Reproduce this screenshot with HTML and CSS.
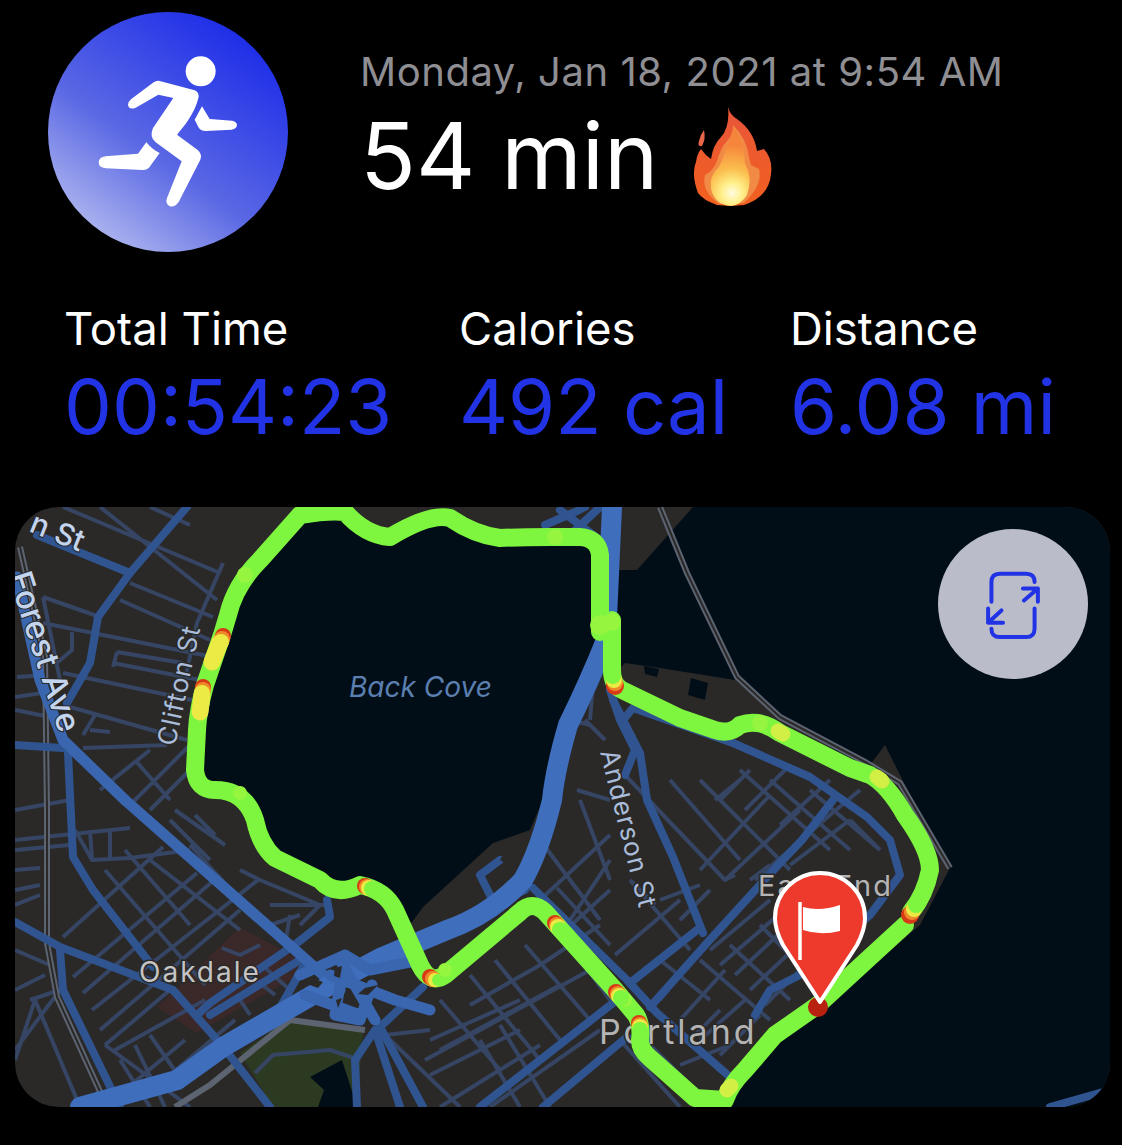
FILE: index.html
```html
<!DOCTYPE html>
<html lang="en">
<head>
<meta charset="UTF-8">
<meta name="viewport" content="width=device-width, initial-scale=1.0">
<title>Workout</title>
<link rel="stylesheet" href="styles.css">
</head>
<body>

<header class="top">
    <div class="badge">
        <svg class="runner" viewBox="55 37 720 720">
            <circle cx="513" cy="215" r="45"/>
            <path d="M295 315 Q296 305 305 298 L372 248 Q380 242 390 244 L495 272 Q510 278 506 296 Q498 330 470 370 L442 405 L505 452 Q518 464 512 480 L447 607 Q435 624 420 620 Q406 612 412 595 L456 485 L378 428 Q358 412 370 385 L431 295 L386 285 L318 324 Q298 332 295 315Z"/>
            <path d="M350 428 Q368 450 390 460 L358 504 Q350 512 338 511 L228 506 Q207 504 207 488 Q208 472 228 470 L325 462Z"/>
            <path d="M517 320 L540 358 L608 363 Q622 366 622 377 Q620 388 606 390 L528 394 Q512 394 506 382 L495 360Z"/>
        </svg>
    </div>
    <div class="summary">
        <div class="date">Monday, Jan 18, 2021 at 9:54 AM</div>
        <div class="duration">
            <span>54 min</span>
            <svg class="flame" viewBox="694 106 80 102">
                <defs>
                    <radialGradient id="fireIn" gradientUnits="userSpaceOnUse" cx="733" cy="194" r="48">
                        <stop offset="0" stop-color="#fffbe0"/>
                        <stop offset="0.22" stop-color="#fff08a"/>
                        <stop offset="0.5" stop-color="#fbbf4e"/>
                        <stop offset="1" stop-color="#f6853c"/>
                    </radialGradient>
                    <linearGradient id="fireOut" x1="0" y1="0" x2="0" y2="1">
                        <stop offset="0" stop-color="#e8553a"/>
                        <stop offset="1" stop-color="#f2601f"/>
                    </linearGradient>
                </defs>
                <path fill="#e8664a" d="M705 131 Q707 140 703 147 Q698 148 700 142 Q701 136 705 131Z"/>
                <path fill="url(#fireOut)" d="M729 108 Q731 116 738 120 Q755 132 758 152 L765 150 Q774 160 772 175 Q770 198 745 206 L732 207 L718 206 Q704 201 699 194 Q692 175 697 163 Q698 155 702 150 Q706 156 712 160 Q714 146 722 138 Q731 128 729 108Z"/>
                <path fill="#f08a45" d="M734 126 Q748 140 750 158 L752 166 L760 170 Q764 186 745 204 L720 205 Q702 192 706 176 Q714 172 718 162 Q722 148 728 142 Q734 136 734 126Z"/>
                <path fill="url(#fireIn)" d="M735 128 Q746 145 746 165 Q754 178 748 196 Q742 206 732 207 Q716 206 712 190 Q710 176 720 168 Q728 150 735 128Z"/>
            </svg>
        </div>
    </div>
</header>

<section class="stats">
    <div class="stat stat-time">
        <div class="stat-label">Total Time</div>
        <div class="stat-value">00:54:23</div>
    </div>
    <div class="stat stat-cal">
        <div class="stat-label">Calories</div>
        <div class="stat-value">492 cal</div>
    </div>
    <div class="stat">
        <div class="stat-label">Distance</div>
        <div class="stat-value">6.08 mi</div>
    </div>
</section>

<section class="map">
    <svg class="map-svg" viewBox="15 507 1095 600">
        <!-- terreno e agua -->
        <rect class="land" x="15" y="507" width="1095" height="600"/>
        <path class="park" d="M240 1053 L287 1020 L363 1030 L357 1107 L273 1107Z"/>
        <path class="campus" d="M240 927 L300 960 L303 973 L207 1027 L197 1033 L157 1007Z"/>
        <path class="water" d="M310 1077 L342 1060 L357 1107 L318 1107 L324 1090Z"/>
        <path class="water" d="M340 507 L385 540 L440 515 L520 535 L590 540 L600 620 L590 660 L560 760 L530 830 L493 843 L423 907 L410 925 L390 900 L360 885 L335 895 L320 880 L270 855 L255 820 L235 795 L205 790 L195 770 L197 730 L205 685 L222 635 L235 590 L260 560 L295 507Z"/>
        <path class="water" d="M693 507 L1110 507 L1110 1107 L730 1107 L745 1075 L778 1040 L820 1012 L920 925 L950 868 L905 785 L885 745 L870 765 L850 760 L780 715 L735 680 L660 668 L625 663 L608 680 L612 570 L637 570Z"/>
        <path class="water" d="M644 666 L659 669 L657 677 L645 674Z M691 678 L708 683 L705 700 L688 695Z"/>

        <!-- ruas pequenas -->
        <path class="street" d="M63 507 L220 573 M100 507 L217 600 M150 507 L190 525 M130 583 L213 617 M120 600 L210 640 M43 597 L100 617 M43 597 L60 680 M43 623 L213 657 M113 663 L200 680 M117 652 L183 663 M117 652 L113 667 M63 673 L192 700 M17 677 L45 675 M70 707 L187 740 M15 697 L42 693 M15 710 L50 717 M83 748 L167 745 M223 563 L197 623 L185 680 M72 632 L72 650 L58 662 M83 735 L95 715 M90 730 L110 732 M100 790 L150 750 M130 805 L190 745 M150 810 L190 770 M135 760 L170 800"/>
        <path class="street" d="M15 810 L70 800 M15 840 L130 828 M15 850 L70 845 M15 870 L40 868 M15 890 L40 885 M15 905 L40 895 M75 830 L92 860 L130 858 L190 850 M90 830 L92 860 M110 830 L110 860 M63 937 L163 847 M73 977 L197 873 M83 993 L220 875 M92 1010 L258 880 M100 1030 L240 910 M105 1045 L170 990 M125 850 L190 925 M105 870 L205 985 M150 860 L240 930 M190 845 L240 900 M170 820 L210 860 M175 810 L225 845 M195 815 L215 835 M240 870 L260 880 L320 905 L300 925 M270 905 L325 905 M290 915 L285 945 M270 925 L300 915 M222 948 L240 955 L260 945 M262 965 L290 990 M250 975 L275 995 M240 1000 L250 1015"/>
        <path class="street" d="M105 1045 L190 1107 M120 1060 L150 1107 M135 1045 L165 1107 M150 1035 L185 1085 M115 1050 L205 1000 M125 1090 L185 1040 M170 1075 L235 1020 M60 990 L15 1050 M30 1000 L60 990 M15 950 L50 965 M15 990 L45 975 M35 1000 L15 1060 M35 1000 L80 1107 M255 1073 L273 1055 L330 1050 L360 1060"/>
        <path class="street" d="M595 660 L590 720 M585 720 L605 740 M590 725 L570 720 M577 790 L610 800 M580 800 L610 880 M610 860 L570 920 M560 935 L610 890 M610 835 L540 900 M540 840 L600 920 M557 888 L610 945 M630 880 L690 950 M680 900 L615 955 M630 880 L655 905 M680 920 L710 890 M660 960 L710 1000 M625 775 L725 880 L735 875 M660 900 L700 885"/>
        <path class="street" d="M700 870 L770 795 M725 880 L800 810 M755 880 L830 815 M790 865 L850 820 M760 885 L800 845 M670 780 L740 860 M700 780 L790 870 M740 770 L830 850 M770 780 L850 850 M810 790 L880 850 M850 820 L880 850 M720 800 L750 770 M745 810 L790 765 M780 825 L830 780 M800 840 L860 790"/>
        <path class="street" d="M715 800 L740 780 M750 880 L770 865 M710 950 L770 900 M720 965 L790 905 M735 975 L810 905 M750 990 L830 915 M765 1005 L840 930 M700 960 L770 1020 M730 945 L790 1000 M760 925 L810 975 M790 905 L830 945 M660 1000 L700 950 M680 1020 L725 970 M700 1040 L745 1000 M720 1055 L760 1015"/>
        <path class="street" d="M470 1005 L540 965 L600 925 M440 1000 L500 1070 M470 975 L540 1060 M495 960 L560 1040 M525 945 L590 1020 M555 925 L610 1000 M430 1040 L520 1000 M440 1050 L560 985 M425 1060 L590 970 M450 1065 L520 1030 M430 1075 L500 1040 M440 1107 L540 1045 M490 1107 L600 1030 M430 1030 L385 1035 L460 1107 M480 1040 L520 1107 M500 1025 L550 1107 M620 1040 L680 1107 M640 1035 L690 1085 M680 1065 L730 1045 M690 1040 L720 1010"/>

        <!-- ferrovia -->
        <path class="rail" d="M20 547 L45 657 L47 810 L47 943 L57 997 L107 1107"/>
        <path class="rail rail-in" d="M20 547 L45 657 L47 810 L47 943 L57 997 L107 1107"/>
        <path class="rail" d="M660 507 L687 573 L737 677 L780 717 L867 763 L900 783 L950 868"/>
        <path class="rail rail-in" d="M660 507 L687 573 L737 677 L780 717 L867 763 L900 783 L950 868"/>
        <path class="rail" d="M175 1107 L210 1085 L290 1020 L365 1030"/>

        <!-- avenidas -->
        <path class="artery" d="M187 507 L130 573 L98 617 L90 663 L67 703"/>
        <path class="artery" d="M37 535 L130 573"/>
        <path class="artery" d="M15 745 L63 748 M68 753 L73 857 L93 890 L153 967"/>
        <path class="artery" d="M15 922 L60 947 L173 990 L220 1043 L270 1107"/>
        <path class="artery" d="M60 950 L63 990 L120 1107"/>
        <path class="artery" d="M327 900 L330 917 L297 943 L210 1003 L197 1015"/>
        <path class="artery" d="M303 967 L277 1013"/>
        <path class="artery" d="M210 1015 L300 960"/>
        <path class="artery" d="M357 1107 L355 1060 L375 1030 L400 1107"/>
        <path class="artery" d="M613 700 L640 753 L647 800 L673 857 L703 933"/>
        <path class="artery" d="M623 720 L633 708 L733 743 L810 777 L867 817 L890 840 L900 875 L870 915 L800 975 L770 990 L755 1015"/>
        <path class="artery" d="M833 800 L802 840 L780 863 L707 943 L650 1007"/>
        <path class="artery" d="M697 930 L630 983"/>
        <path class="artery" d="M533 888 L627 980 L657 1013 L730 1077"/>
        <path class="artery" d="M613 1003 L480 1107"/>
        <path class="artery" d="M627 1037 L543 1107"/>
        <path class="artery" d="M423 987 L380 1027 L423 1107"/>
        <path class="artery" d="M500 860 L480 875 L495 905 L525 890"/>
        <path class="artery" d="M610 690 L620 720 L635 750 L625 775"/>
        <path class="artery" d="M545 525 L575 512 L585 507 M560 510 L600 540 M600 507 L570 535"/>
        <path class="artery" d="M1050 1107 L1110 1090"/>

        <!-- via rapida e trevo -->
        <path class="highway-thin" d="M125 800 L303 957 L340 990"/>
        <path class="highway-thin" d="M17 577 L40 680 L63 740 L125 800"/>
        <path class="highway" d="M612 507 Q608 600 606 640 Q590 680 568 725 Q555 770 552 800 Q540 850 523 880 Q490 915 447 930 L380 958 L330 985 L223 1047 L177 1080 L80 1107"/>
        <path class="highway-thin" d="M330 975 L395 1000 L430 1010 M300 975 L345 955 L370 970 L420 960 M345 955 L335 1015 L360 1020 L372 985 M305 995 L360 1015 M340 960 L375 1020"/>
        <path class="hole" d="M312 978 L323 982 L318 988 L307 984Z M335 968 L342 966 L340 978 L334 976Z M365 988 L378 985 L368 995 L358 994Z M336 1000 L342 998 L338 1008Z"/>
        <path class="hole" d="M505 852 L513 850 L508 865 L500 860Z"/>

        <!-- nomes -->
        <text class="label label-water" x="349" y="697">Back Cove</text>
        <text class="label label-place" x="139" y="982">Oakdale</text>
        <text class="label label-city" x="599" y="1044">Portland</text>
        <text class="label label-city label-east" x="758" y="896">East End</text>
        <text class="label label-road" transform="translate(28,531) rotate(22)">n St</text>
        <text class="label label-road label-forest" transform="translate(8,576) rotate(72)">Forest Ave</text>
        <text class="label label-street" transform="translate(175,747) rotate(-78)">Clifton St</text>
        <text class="label label-street" transform="translate(600,752) rotate(76)">Anderson St</text>

        <!-- percurso -->
        <path class="route" d="M911 912 Q925 895 930 870 Q930 850 905 815 Q888 785 870 775 L850 768 L780 733 Q760 718 740 725 Q730 735 715 730 L680 718 L622 690 Q612 685 612 670 L612 620"/>
        <path class="route" d="M600 632 L600 555 Q598 538 580 537 L550 537 Q520 537 500 538 Q475 535 450 518 Q430 513 390 537 Q365 535 345 512 Q330 510 300 515 L260 560 Q235 585 228 615 L222 635 L205 685 Q198 710 197 730 L195 770 Q197 790 215 790 Q245 790 255 820 Q260 845 275 858 L320 880 Q335 897 360 885 Q385 890 395 910 L420 965 Q430 985 445 975 L520 912 Q532 900 545 912 L615 990 L636 1015 Q642 1025 640 1040 Q640 1050 650 1058 L695 1098 L725 1100 Q730 1085 745 1070 L775 1035 L818 1005 L905 925"/>
        <g class="route-tint">
            <circle cx="555" cy="537" r="8"/><circle cx="600" cy="625" r="10"/><circle cx="612" cy="622" r="9"/>
            <circle cx="760" cy="723" r="8"/><circle cx="880" cy="780" r="8"/><circle cx="245" cy="575" r="8"/>
            <circle cx="240" cy="793" r="7"/><circle cx="445" cy="970" r="7"/><circle cx="625" cy="1000" r="7"/>
        </g>
        <!-- trechos lentos -->
        <path class="slow" d="M220 642 L212 662"/>
        <path class="slow" d="M202 695 L200 712"/>
        <path class="slow-soft" d="M783 734 L778 731"/>
        <path class="slow-soft" d="M877 777 L882 781"/>
        <path class="slow-soft" d="M727 1090 L731 1086"/>
        <g class="cap-red">
            <circle cx="223" cy="636" r="8"/><circle cx="203" cy="687" r="8"/><circle cx="615" cy="686" r="9"/>
            <circle cx="910" cy="915" r="9"/><circle cx="616" cy="992" r="8"/><circle cx="639" cy="1023" r="8"/>
            <circle cx="430" cy="977" r="8"/><circle cx="555" cy="923" r="8"/><circle cx="365" cy="886" r="8"/>
        </g>
        <g class="cap-orange">
            <circle cx="222" cy="639" r="8"/><circle cx="203" cy="690" r="8"/><circle cx="615" cy="683" r="8"/>
            <circle cx="912" cy="912" r="8"/><circle cx="618" cy="994" r="8"/><circle cx="640" cy="1025" r="8"/>
            <circle cx="433" cy="979" r="8"/><circle cx="557" cy="925" r="8"/><circle cx="367" cy="887" r="8"/>
        </g>
        <g class="cap-yellow">
            <circle cx="221" cy="642" r="8"/><circle cx="202" cy="693" r="8"/><circle cx="614" cy="680" r="8"/>
            <circle cx="914" cy="909" r="8"/><circle cx="619" cy="996" r="8"/><circle cx="640" cy="1027" r="8"/>
            <circle cx="435" cy="980" r="7"/><circle cx="558" cy="927" r="8"/><circle cx="369" cy="888" r="8"/>
        </g>
        <g class="cap-green">
            <circle cx="613" cy="676" r="8"/><circle cx="916" cy="905" r="8"/><circle cx="621" cy="998" r="8"/>
            <circle cx="640" cy="1030" r="8"/><circle cx="438" cy="980" r="6"/><circle cx="560" cy="930" r="8"/>
            <circle cx="372" cy="889" r="8"/>
        </g>
        <circle class="cap-dark" cx="818" cy="1007" r="10"/>

        <!-- marcador -->
        <path class="pin" d="M820 1002 L783 945 Q775 930 775 918 A45 45 0 0 1 865 918 Q865 930 857 945Z"/>
        <path class="pin-flag" d="M803 907 Q820 912 840 905 L840 931 Q820 936 803 930Z"/>
        <path class="pin-pole" d="M800 902 V960"/>
    </svg>
    <button class="flip" type="button">
        <svg viewBox="190 170 180 220">
            <path d="M215 272 V212 Q215 187 240 187 H320 Q345 187 345 212 M345 292 V353 Q345 378 320 378 H240 Q215 378 215 353 M310 232 H355 V272 M355 232 L313 268 M205 292 V335 H250 M205 335 L245 298"/>
        </svg>
    </button>
</section>

</body>
</html>
```

FILE: styles.css
```css
body {
    margin: 0;
    background-color: #000000;
    font-family: Inter, "Liberation Sans", sans-serif;
    width: 1122px;
    height: 1145px;
    overflow: hidden;
}
.top {
    display: flex;
    padding: 12px 0 0 48px;
    height: 240px;
}
.badge {
    width: 240px;
    height: 240px;
    border-radius: 50%;
    background: linear-gradient(216deg, #1c2ce8 12%, #5a68e4 58%, #b9c0f0 92%);
}
.runner {
    display: block;
    width: 240px;
    height: 240px;
    fill: #ffffff;
}
.summary {
    margin-left: 72px;
    padding-top: 36px;
}
.date {
    color: #8e8e93;
    font-size: 40px;
    letter-spacing: 0.55px;
    line-height: 48px;
}
.duration {
    display: flex;
    align-items: center;
    margin-top: 8px;
    color: #ffffff;
    font-size: 92px;
    line-height: 104px;
}
.flame {
    width: 80px;
    height: 102px;
    margin-left: 35px;
}
.stats {
    display: flex;
    padding: 51px 0 0 64px;
}
.stat-time {
    width: 395px;
}
.stat-cal {
    width: 331px;
}
.stat-label {
    color: #ffffff;
    font-size: 45.5px;
    line-height: 52px;
}
.stat-value {
    margin-top: 9px;
    color: #2233e6;
    font-size: 76px;
    line-height: 84px;
}
.map {
    position: relative;
    margin: 59px 0 0 15px;
    width: 1095px;
    height: 600px;
    border-radius: 44px;
    overflow: hidden;
}
.map-svg {
    display: block;
    width: 1095px;
    height: 600px;
}
.land { fill: #2a2928; }
.park { fill: #2b3a20; }
.campus { fill: #3b2828; }
.water { fill: #020e17; }
.hole { fill: #2a2928; }
.street, .rail, .artery, .highway, .highway-thin, .route, .slow, .slow-soft {
    fill: none;
    stroke-linecap: round;
    stroke-linejoin: round;
}
.street {
    stroke: #354563;
    stroke-width: 4;
    stroke-linecap: butt;
}
.rail {
    stroke: #5c6371;
    stroke-width: 6;
    stroke-linecap: butt;
}
.rail-in {
    stroke: #2a2928;
    stroke-width: 2;
}
.artery {
    stroke: #30548f;
    stroke-width: 8;
}
.highway-thin {
    stroke: #3a66b0;
    stroke-width: 11;
}
.highway {
    stroke: #3f6ebd;
    stroke-width: 20;
}
.route {
    stroke: #7ef53f;
    stroke-width: 18;
}
.route-tint {
    fill: #96f53f;
}
.slow {
    stroke: #ecea45;
    stroke-width: 17;
}
.slow-soft {
    stroke: #d2ef45;
    stroke-width: 15;
}
.cap-red {
    fill: #d63a16;
}
.cap-orange {
    fill: #f08a28;
}
.cap-yellow {
    fill: #ecea45;
}
.cap-green {
    fill: #7ef53f;
}
.cap-dark {
    fill: #b8200f;
}
.label {
    font-family: Inter, "Liberation Sans", sans-serif;
}
.label-water {
    fill: #5b7fb0;
    font-size: 28px;
    font-style: italic;
}
.label-place {
    fill: #c4c4c4;
    font-size: 28px;
    letter-spacing: 2px;
    stroke: #2a2928;
    stroke-width: 3px;
    paint-order: stroke;
}
.label-city {
    fill: #b4b4b4;
    font-size: 34px;
    letter-spacing: 3px;
    stroke: #2a2928;
    stroke-width: 3px;
    paint-order: stroke;
}
.label-east {
    font-size: 29px;
    letter-spacing: 2px;
}
.label-road {
    fill: #c3d4ee;
    font-size: 30px;
    font-weight: 500;
    stroke: #2a2928;
    stroke-width: 2px;
    paint-order: stroke;
}
.label-forest {
    font-size: 33px;
}
.label-street {
    fill: #a9bcd9;
    font-size: 26px;
    letter-spacing: 1px;
    stroke: #2a2928;
    stroke-width: 3px;
    paint-order: stroke;
}
.pin {
    fill: #ee3a2c;
    stroke: #ffffff;
    stroke-width: 4;
    stroke-linejoin: round;
}
.pin-flag {
    fill: #ffffff;
}
.pin-pole {
    fill: none;
    stroke: #ffffff;
    stroke-width: 3.5;
}
.flip {
    position: absolute;
    top: 22px;
    right: 22px;
    width: 150px;
    height: 150px;
    padding: 0;
    border: none;
    border-radius: 50%;
    background-color: #babdc9;
    display: flex;
    align-items: center;
    justify-content: center;
}
.flip svg {
    width: 60px;
    height: 73px;
    fill: none;
    stroke: #2233e6;
    stroke-width: 12;
    stroke-linecap: round;
    stroke-linejoin: round;
}
```
